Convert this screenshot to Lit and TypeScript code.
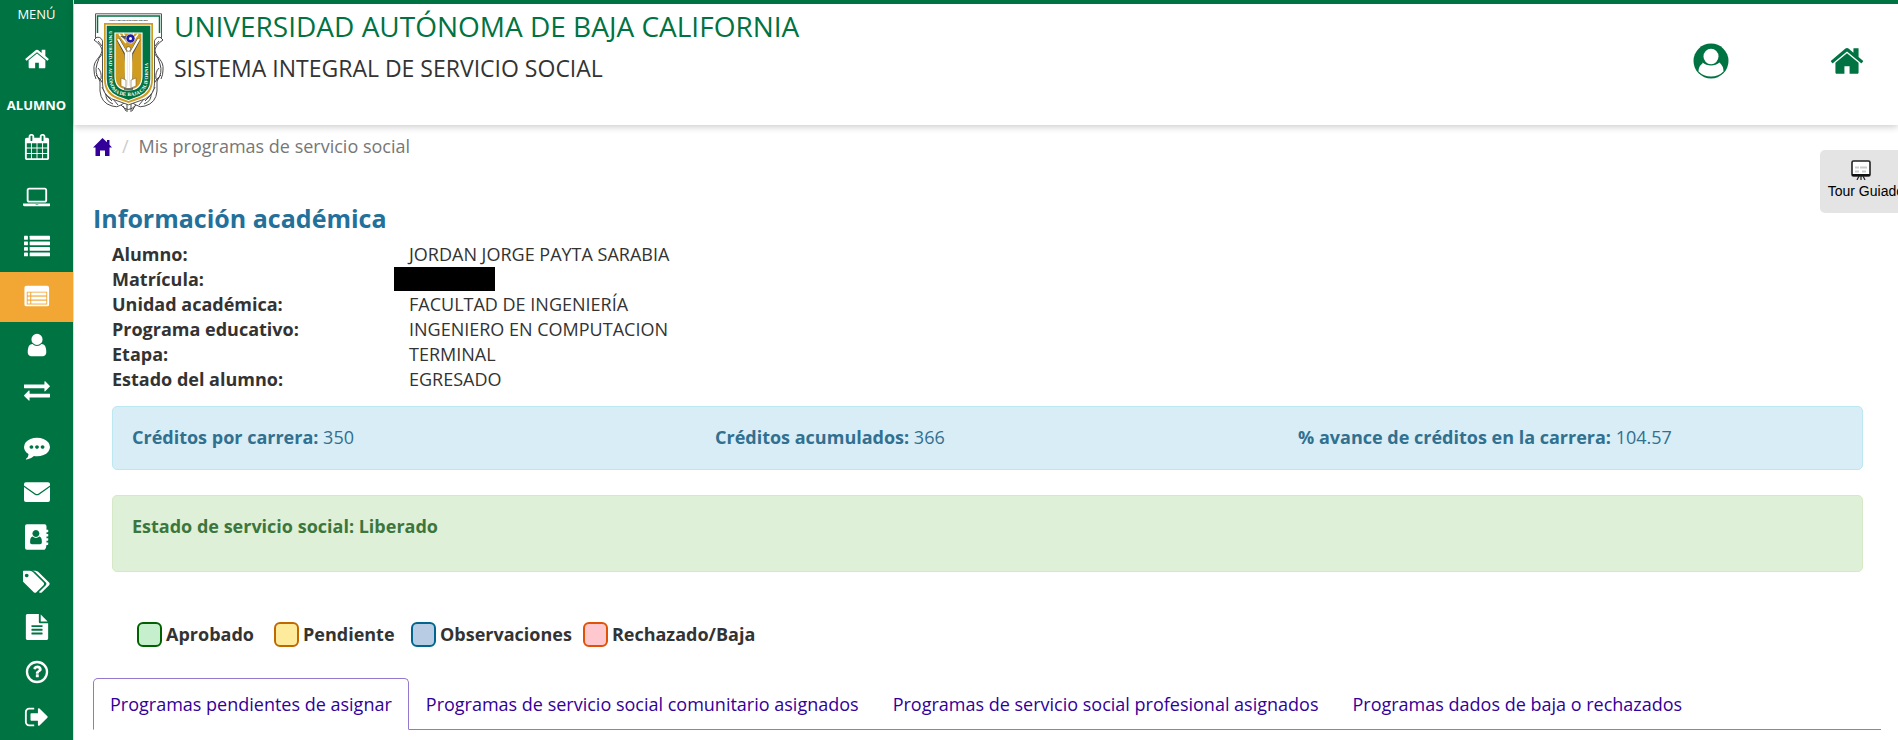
import { LitElement, html, css, svg } from "lit";
import { customElement, state } from "lit/decorators.js";

const HOME =
  "M1472 992v480q0 26-19 45t-45 19h-384v-384h-256v384h-384q-26 0-45-19t-19-45v-480q0-1 .5-3t.5-3l575-474 575 474q1 2 1 6zm223-69l-62 74q-8 9-21 11h-3q-13 0-21-7l-692-577-692 577q-12 8-24 7-13-2-21-11l-62-74q-8-10-7-23.5t11-21.5l719-599q32-26 76-26t76 26l244 204v-195q0-14 9-23t23-9h192q14 0 23 9t9 23v408l219 182q10 8 11 21.5t-7 23.5z";

const icon = (content: unknown, width = 1792) =>
  html`<svg class="icon" viewBox="0 0 ${width} 1792" aria-hidden="true">${content}</svg>`;

const homeIcon = icon(svg`<path d=${HOME} />`);

const icons = {
  calendar: icon(svg`<path d="M192 1664h288v-288h-288v288zm352 0h320v-288h-320v288zm-352-352h288v-320h-288v320zm352 0h320v-320h-320v320zm-352-384h288v-288h-288v288zm736 736h320v-288h-320v288zm-384-736h320v-288h-320v288zm768 736h288v-288h-288v288zm-384-352h320v-320h-320v320zm-352-864v-288q0-13-9.5-22.5t-22.5-9.5h-64q-13 0-22.5 9.5t-9.5 22.5v288q0 13 9.5 22.5t22.5 9.5h64q13 0 22.5-9.5t9.5-22.5zm736 864h288v-320h-288v320zm-384-384h320v-288h-320v288zm384 0h288v-288h-288v288zm32-480v-288q0-13-9.5-22.5t-22.5-9.5h-64q-13 0-22.5 9.5t-9.5 22.5v288q0 13 9.5 22.5t22.5 9.5h64q13 0 22.5-9.5t9.5-22.5zm384-64v1280q0 52-38 90t-90 38h-1408q-52 0-90-38t-38-90v-1280q0-52 38-90t90-38h128v-96q0-66 47-113t113-47h64q66 0 113 47t47 113v96h384v-96q0-66 47-113t113-47h64q66 0 113 47t47 113v96h128q52 0 90 38t38 90z" />`),
  laptop: icon(svg`<path d="M416 1280q-66 0-113-47t-47-113v-704q0-66 47-113t113-47h1088q66 0 113 47t47 113v704q0 66-47 113t-113 47h-1088zm-32-864v704q0 13 9.5 22.5t22.5 9.5h1088q13 0 22.5-9.5t9.5-22.5v-704q0-13-9.5-22.5t-22.5-9.5h-1088q-13 0-22.5 9.5t-9.5 22.5zm1376 928h160v96q0 40-47 68t-113 28h-1600q-66 0-113-28t-47-68v-96h1760zm-720 96q16 0 16-16t-16-16h-160q-16 0-16 16t16 16h160z" />`, 1920),
  list: icon([128, 512, 896, 1280].map(
    (y) => svg`<rect x="0" y=${y} width="270" height="260" rx="30" /><rect x="390" y=${y} width="1402" height="260" rx="30" />`,
  )),
  listAlt: icon(svg`
    <path fill-rule="evenodd" d="M160 128h1440q130 0 130 130v1150q0 130-130 130H160q-130 0-130-130V258q0-130 130-130zM190 530v880h1410V530z" />
    ${[590, 870, 1150].map((y) => svg`<rect x="250" y=${y} width="180" height="200" /><rect x="500" y=${y} width="1040" height="200" />`)}
  `),
  user: icon(svg`<path d="M1536 1399q0 109-62.5 187t-150.5 78h-854q-88 0-150.5-78t-62.5-187q0-85 8.5-160.5t31.5-152 58.5-131 94-89 134.5-34.5q131 128 313 128t313-128q76 0 134.5 34.5t94 89 58.5 131 31.5 152 8.5 160.5zm-256-887q0 159-112.5 271.5t-271.5 112.5-271.5-112.5-112.5-271.5 112.5-271.5 271.5-112.5 271.5 112.5 112.5 271.5z" />`),
  exchange: icon(svg`<path d="M1792 1184v192q0 13-9.5 22.5t-22.5 9.5h-1376v192q0 13-9.5 22.5t-22.5 9.5q-12 0-24-10l-319-320q-9-9-9-22 0-14 9-23l320-320q9-9 23-9 13 0 22.5 9.5t9.5 22.5v192h1376q13 0 22.5 9.5t9.5 22.5zm0-544q0 14-9 23l-320 320q-9 9-23 9-13 0-22.5-9.5t-9.5-22.5v-192h-1376q-13 0-22.5-9.5t-9.5-22.5v-192q0-13 9.5-22.5t22.5-9.5h1376v-192q0-14 9-23t23-9q12 0 24 10l319 319q9 9 9 23z" />`),
  comment: icon(svg`<path d="M640 896q0-53-37.5-90.5t-90.5-37.5-90.5 37.5-37.5 90.5 37.5 90.5 90.5 37.5 90.5-37.5 37.5-90.5zm384 0q0-53-37.5-90.5t-90.5-37.5-90.5 37.5-37.5 90.5 37.5 90.5 90.5 37.5 90.5-37.5 37.5-90.5zm384 0q0-53-37.5-90.5t-90.5-37.5-90.5 37.5-37.5 90.5 37.5 90.5 90.5 37.5 90.5-37.5 37.5-90.5zm384 0q0 174-120 321.5t-326 233-450 85.5q-110 0-211-18-173 173-435 229-52 10-86 13-12 1-22-6t-13-18q-4-15 20-37 5-5 23.5-21.5t25.5-23.5 23.5-25.5 24-31.5 20.5-37 20-48 14.5-57.5 12.5-72.5q-146-90-229.5-216.5t-83.5-269.5q0-174 120-321.5t326-233 450-85.5 450 85.5 326 233 120 321.5z" />`),
  mail: icon(svg`<path d="M0 350q0-134 134-134h1524q134 0 134 134v90L1010 1000q-114 70-228 0L0 440zM0 550l750 530q146 80 292 0l750-530v900q0 134-134 134H134Q0 1584 0 1450z" />`),
  addressBook: icon(svg`<path fill-rule="evenodd" d="M200 20h1220q130 0 130 130v250h120v130q0 40-40 40h-80v120h120v130q0 40-40 40h-80v120h120v130q0 40-40 40h-80v120h120v130q0 40-40 40h-80q0 190-130 332H200q-130 0-130-130V150Q70 20 200 20zM820 420a240 240 0 1 0 .1 0zM600 870q-180 20-180 340v60q0 120 120 120h570q120 0 120-120v-60q0-320-180-340-90 90-225 90t-225-90z" />`),
  tags: icon(svg`<path d="M384 448q0-53-37.5-90.5t-90.5-37.5-90.5 37.5-37.5 90.5 37.5 90.5 90.5 37.5 90.5-37.5 37.5-90.5zm1067 576q0 53-37 90l-491 492q-39 37-91 37-53 0-90-37l-715-716q-38-37-64.500-101t-26.500-117v-416q0-52 38-90t90-38h416q53 0 117 26.500t102 64.500l715 714q37 39 37 91zm384 0q0 53-37 90l-491 492q-39 37-91 37-36 0-59-14t-53-45l470-470q37-37 37-90 0-52-37-91l-715-714q-38-38-102-64.500t-117-26.500h224q53 0 117 26.500t102 64.500l715 714q37 39 37 91z" />`, 1856),
  file: icon(svg`<path d="M1596 476q14 14 28 36h-472v-472q22 14 36 28zm-476 164h544v1056q0 40-28 68t-68 28h-1344q-40 0-68-28t-28-68v-1600q0-40 28-68t68-28h800v544q0 40 28 68t68 28zm160 736v-64q0-14-9-23t-23-9h-704q-14 0-23 9t-9 23v64q0 14 9 23t23 9h704q14 0 23-9t9-23zm0-256v-64q0-14-9-23t-23-9h-704q-14 0-23 9t-9 23v64q0 14 9 23t23 9h704q14 0 23-9t9-23zm0-256v-64q0-14-9-23t-23-9h-704q-14 0-23 9t-9 23v64q0 14 9 23t23 9h704q14 0 23-9t9-23z" />`),
  help: icon(svg`
    <circle cx="896" cy="896" r="690" fill="none" stroke="currentColor" stroke-width="160" />
    <path transform="translate(332 290) scale(.63)" d="M1088 1256v240q0 16-12 28t-28 12h-240q-16 0-28-12t-12-28v-240q0-16 12-28t28-12h240q16 0 28 12t12 28zm316-600q0 54-15.5 101t-35 76.5-55 59.5-57.5 43.5-61 35.5q-41 23-68.5 65t-27.500 67q0 17-12 32.5t-28 15.5h-240q-15 0-25.5-18.5t-10.5-37.500v-45q0-83 65-156.500t143-108.500q59-27 84-56t25-76q0-42-46.500-74t-107.500-32q-65 0-108 29-35 25-107 115-13 16-31 16-12 0-25-8l-164-125q-13-10-15.500-25t5.500-28q160-266 464-266 80 0 161 31t146 83 106 127.500 41 158.500z" />
  `),
  exit: icon(svg`<path d="M704 1440q0 4 1 20t.5 26.5-3 23.5-10 19.5-20.5 6.5h-320q-119 0-203.500-84.500t-84.500-203.500v-704q0-119 84.500-203.500t203.500-84.500h320q13 0 22.500 9.500t9.500 22.500q0 4 1 20t.5 26.500-3 23.500-10 19.500-20.500 6.500h-320q-66 0-113 47t-47 113v704q0 66 47 113t113 47h312l11.500 1 11.500 3 8 5.500 7 9 2 13.500zm928-544q0 26-19 45l-544 544q-19 19-45 19t-45-19-19-45v-288h-448q-26 0-45-19t-19-45v-384q0-26 19-45t45-19h448v-288q0-26 19-45t45-19 45 19l544 544q19 19 19 45z" />`, 1700),
};

@customElement("uabc-crest")
class UabcCrest extends LitElement {
  static styles = css`
    :host {
      display: block;
    }
    .crest {
      display: block;
      width: 71px;
      height: 100px;
    }
    .motto {
      font: bold 2px "Liberation Sans", sans-serif;
      text-anchor: middle;
    }
    .legend {
      font: bold 5px "Liberation Serif", serif;
      fill: #fff;
    }
  `;

  render() {
    return html`<svg class="crest" viewBox="0 0 71 100" role="img" aria-label="Escudo UABC">
      <g fill="#fff" stroke="#4a4a4a" stroke-width="1">
        <path d="M2.500 21C1 28 11 29 9 38 7 46 0 47 1 57q0 5 2 9M68.500 21C70 28 60 29 62 38 64 46 71 47 70 57q0 5-2 9" />
        <path d="M1 27q5-6 8-2l2 4v46L7 68Q1 60 4 51q1-6 6-11-1-8-9-13zM70 27q-5-6-8-2l-2 4v46l4-7q6-8 3-17-1-6-6-11 1-8 9-13z" />
        <path d="M7 66v12q1 12 12 15 5 2 9-1 7 9 15 0 4 3 9 1 11-3 12-15V66L52 84q-16 9-33 0z" />
        <path d="M9 74q3 9 10 14M62 74q-3 9-10 14M13 80q-1 8 7 11M58 80q1 8-7 11M20 86l5 6M51 86l-5 6" fill="none" />
        <path d="M28 92q7-6 15 0M30 93l3 5M34 91v8M38 91v8M42 93l-3 5M5 55q4 4 3 11M66 55q-4 4-3 11M5 28l4 5M66 28l-4 5M3 62l5 5M68 62l-5 5" fill="none" />
      </g>
      <path d="M2.500.8h66v24q-5-2-7 3v43q0 10-9 15l-17 6-17-6q-9-5-9-15v-43q-2-5-7-3z" fill="#fff" stroke="#555" />
      <path d="M4.500 20V3h62v17" fill="none" stroke="#007342" stroke-width="1.500" />
      <text class="motto" x="35.500" y="7.500">POR LA REALIZACIÓN PLENA DEL SER</text>
      <path d="M11 10h49v56q0 15-13 20l-11.500 4L24 86q-13-5-13-20z" fill="#cf9b21" />
      <path d="M12.700 11.700h45.600V66q0 13-12 18l-10.800 4-10.800-4q-12-5-12-18z" fill="#fff" />
      <path d="M13.700 12.700h43.600V66q0 12-11 17l-10.800 4-10.800-4q-11-5-11-17z" fill="#007342" />
      <path id="around" d="M16 16v48q0 19 19.500 19T55 64V16" fill="none" />
      <text class="legend"><textPath href="#around" startOffset="2">UNIVERSIDAD AUTÓNOMA DE BAJA CALIFORNIA</textPath></text>
      <path d="M22 20h27v43q0 14-13.500 14T22 63z" fill="#cf9b21" stroke="#fff" stroke-width="1.200" />
      <path d="M26 21l7 9M45 21l-7 9M30 20l4 8M41 20l-4 8" stroke="#fff" stroke-width="1.500" />
      <path d="M27 23h11l-3 5z" fill="#555" />
      <circle cx="37.500" cy="25.500" r="4.500" fill="#1d1aa5" stroke="#fff" stroke-width=".6" />
      <circle cx="37.500" cy="25.500" r="1.500" fill="#fff" />
      <path d="M25 26l8 15 1 11-1 23h5l-1-23 1-11 8-15" fill="none" stroke="#4d4639" stroke-width="3.600" />
      <path d="M25 26l8 14v34h5V40l8-14M35.500 38v35" fill="none" stroke="#fff" stroke-width="2.400" />
      <circle cx="35.500" cy="36" r="2.300" fill="#fff" stroke="#4d4639" stroke-width=".6" />
      <path d="M28 65l5 2v8l-5-2zM43 65l-5 2v8l5-2z" fill="#fff" stroke="#80662a" stroke-width=".6" />
    </svg>`;
  }
}

@customElement("app-root")
class AppRoot extends LitElement {
  @state() private tab = 0;

  static styles = css`
    :host {
      display: flex;
      min-height: 100vh;
      overflow: hidden;
      position: relative;
      font-family: "Open Sans", "Noto Sans", sans-serif;
      font-size: 18px;
      line-height: 25px;
      color: #333;
      background: #fff;
    }
    * {
      box-sizing: border-box;
    }
    a {
      color: inherit;
      text-decoration: none;
    }
    .icon {
      display: block;
      height: 26px;
      fill: currentColor;
    }
    .sidebar {
      flex: none;
      width: 74px;
      background: #007342;
      color: #fff;
      border-right: 1px solid #cfe6da;
      text-align: center;
    }
    .menu-title {
      font-size: 13px;
      line-height: 28px;
    }
    .menu-section {
      font-size: 13px;
      font-weight: bold;
      line-height: 30px;
      padding-bottom: 2px;
    }
    .links {
      list-style: none;
      margin: 0;
      padding: 0;
    }
    .links.lower {
      padding-top: 12px;
    }
    .link {
      display: flex;
      align-items: center;
      justify-content: center;
      height: 50px;
    }
    .link.start {
      height: 62px;
    }
    .middle .link,
    .lower .link {
      height: 45px;
    }
    .link.active {
      background: #f2a633;
    }
    .page {
      flex: 1;
      min-width: 0;
    }
    .header {
      display: flex;
      align-items: flex-start;
      border-top: 4px solid #007342;
      padding: 9px 33px 12px 19px;
      gap: 10px;
      box-shadow: 0 2px 7px rgba(0, 0, 0, 0.2);
    }
    .titles {
      flex: 1;
    }
    .title,
    .subtitle {
      margin: 0;
      font-weight: normal;
      line-height: 30px;
    }
    .title {
      margin-top: -2px;
      font-size: 28px;
      color: #007342;
    }
    .subtitle {
      font-size: 23px;
      padding-top: 12px;
    }
    .actions {
      display: flex;
      align-items: center;
      gap: 100px;
      height: 96px;
      color: #007342;
    }
    .actions .icon {
      height: 36px;
    }
    .content {
      padding: 9px 17px 0 19px;
    }
    .breadcrumb {
      display: flex;
      align-items: center;
      color: #777;
      padding-bottom: 42px;
    }
    .crumb-home {
      color: #330099;
    }
    .crumb-home svg {
      display: block;
      width: 19px;
      height: 18px;
      fill: currentColor;
    }
    .slash {
      color: #ccc;
      padding: 0 10px;
    }
    .heading {
      margin: 0;
      font-size: 25px;
      line-height: 34px;
      color: #23719a;
    }
    .panel {
      padding: 7px 18px 0 19px;
    }
    .facts {
      display: grid;
      grid-template-columns: 297px 1fr;
      margin: 0;
    }
    .facts dt {
      font-weight: bold;
    }
    .facts dd {
      margin: 0;
    }
    .redacted {
      display: block;
      width: 101px;
      height: 24px;
      margin-left: -15px;
      background: #000;
    }
    .box {
      border: 1px solid;
      border-radius: 5px;
    }
    .credits {
      display: grid;
      grid-template-columns: repeat(3, 1fr);
      margin: 14px 0 25px;
      padding: 18px 0 19px;
      color: #31708f;
      background: #d9edf7;
      border-color: #bce8f1;
    }
    .credits span {
      padding-left: 19px;
    }
    .status {
      padding: 18px 19px 32px;
      color: #3c763d;
      background: #dff0d8;
      border-color: #d6e9c6;
      font-weight: bold;
    }
    .keys {
      display: flex;
      flex-wrap: wrap;
      list-style: none;
      margin: 0;
      padding: 50px 25px 31px;
      font-weight: bold;
    }
    .key {
      display: flex;
      gap: 4px;
      min-width: 137px;
      padding-right: 11px;
    }
    .swatch {
      width: 25px;
      height: 25px;
      border: 2px solid;
      border-radius: 6px;
    }
    .approved {
      background: #c6efce;
      border-color: #006100;
    }
    .pending {
      background: #ffeb9c;
      border-color: #bf6900;
    }
    .notes {
      background: #b8cce4;
      border-color: #00668f;
    }
    .rejected {
      background: #ffc7ce;
      border-color: #e05206;
    }
    .tabs {
      display: flex;
      border-bottom: 1px solid #9478cd;
    }
    .tab {
      font: inherit;
      color: #330099;
      background: none;
      margin: 0 0 -1px;
      padding: 13px 16px 12px;
      border: 1px solid transparent;
      border-radius: 5px 5px 0 0;
      cursor: pointer;
    }
    .tab.active {
      background: #fff;
      border-color: #9478cd;
      border-bottom-color: #fff;
    }
    .tour {
      position: absolute;
      top: 150px;
      right: -14px;
      display: flex;
      flex-direction: column;
      align-items: center;
      gap: 1px;
      padding: 10px 8px;
      height: 63px;
      border: 0;
      border-radius: 5px;
      background: #e4e4e4;
      color: #000;
      font: 14px/20px "Liberation Sans", Arial, sans-serif;
    }
    .tour svg {
      width: 20px;
      height: 20px;
      margin-right: 10px;
    }
  `;

  private link(label: string, glyph: unknown, active = false) {
    return html`<li><a class="link ${active ? "active" : ""}" href="#" aria-label=${label}>${glyph}</a></li>`;
  }

  render() {
    const tabs = [
      "Programas pendientes de asignar",
      "Programas de servicio social comunitario asignados",
      "Programas de servicio social profesional asignados",
      "Programas dados de baja o rechazados",
    ];
    return html`
      <nav class="sidebar" aria-label="Menú">
        <div class="menu-title">MENÚ</div>
        <a class="link start" href="#" aria-label="Inicio">${homeIcon}</a>
        <div class="menu-section">ALUMNO</div>
        <ul class="links">
          ${this.link("Calendario", icons.calendar)}
          ${this.link("Cursos", icons.laptop)}
          ${this.link("Listado", icons.list)}
          ${this.link("Mis programas", icons.listAlt, true)}
        </ul>
        <ul class="links middle">
          ${this.link("Perfil", icons.user)}
          ${this.link("Cambios", icons.exchange)}
        </ul>
        <ul class="links lower">
          ${this.link("Comentarios", icons.comment)}
          ${this.link("Correo", icons.mail)}
          ${this.link("Contactos", icons.addressBook)}
          ${this.link("Etiquetas", icons.tags)}
          ${this.link("Documentos", icons.file)}
          ${this.link("Ayuda", icons.help)}
          ${this.link("Salir", icons.exit)}
        </ul>
      </nav>
      <div class="page">
        <header class="header">
          <uabc-crest></uabc-crest>
          <div class="titles">
            <h1 class="title">UNIVERSIDAD AUTÓNOMA DE BAJA CALIFORNIA</h1>
            <h2 class="subtitle">SISTEMA INTEGRAL DE SERVICIO SOCIAL</h2>
          </div>
          <div class="actions">
            <a href="#" aria-label="Usuario">
              <svg class="icon" viewBox="0 0 36 36" aria-hidden="true">
                <circle cx="18" cy="18" r="17.500" />
                <path d="M9.500 20.500Q5.500 23 5.500 28.500 10.500 33.500 18 33.500T30.500 28.500Q30.500 23 26.500 19.500 23 22.500 18 22.500T9.500 19.500z" fill="#fff" />
                <ellipse cx="18" cy="13.500" rx="7.500" ry="7.800" fill="#fff" />
              </svg>
            </a>
            <a href="#" aria-label="Inicio">${homeIcon}</a>
          </div>
        </header>
        <main class="content">
          <nav class="breadcrumb" aria-label="Ruta">
            <a class="crumb-home" href="#" aria-label="Inicio">
              <svg viewBox="0 0 19 18" aria-hidden="true"><path d="M9.500 0L14 4.300V2h2.500v4.800L19 9.500h-2.500V18H12v-5.500H7V18H2.500V9.500H0z" /></svg>
            </a>
            <span class="slash">/</span>
            <span>Mis programas de servicio social</span>
          </nav>
          <h3 class="heading">Información académica</h3>
          <section class="panel">
            <dl class="facts">
              <dt>Alumno:</dt><dd>JORDAN JORGE PAYTA SARABIA</dd>
              <dt>Matrícula:</dt><dd><span class="redacted"></span></dd>
              <dt>Unidad académica:</dt><dd>FACULTAD DE INGENIERÍA</dd>
              <dt>Programa educativo:</dt><dd>INGENIERO EN COMPUTACION</dd>
              <dt>Etapa:</dt><dd>TERMINAL</dd>
              <dt>Estado del alumno:</dt><dd>EGRESADO</dd>
            </dl>
            <div class="box credits">
              <span><b>Créditos por carrera:</b> 350</span>
              <span><b>Créditos acumulados:</b> 366</span>
              <span><b>% avance de créditos en la carrera:</b> 104.57</span>
            </div>
            <div class="box status">Estado de servicio social: Liberado</div>
            <ul class="keys">
              <li class="key"><span class="swatch approved"></span>Aprobado</li>
              <li class="key"><span class="swatch pending"></span>Pendiente</li>
              <li class="key"><span class="swatch notes"></span>Observaciones</li>
              <li class="key"><span class="swatch rejected"></span>Rechazado/Baja</li>
            </ul>
          </section>
          <div class="tabs" role="tablist">
            ${tabs.map(
              (name, i) => html`<button
                class="tab ${i === this.tab ? "active" : ""}"
                role="tab"
                aria-selected=${i === this.tab}
                @click=${() => (this.tab = i)}
              >${name}</button>`,
            )}
          </div>
        </main>
      </div>
      <button class="tour">
        <svg viewBox="0 0 20 20" aria-hidden="true">
          <path d="M10 15v5M8 16l-2 4M12 16l2 4" stroke="#222" stroke-width="1.200" />
          <rect x="1" y="1" width="18" height="15" rx="1.500" fill="#fff" stroke="#222" stroke-width="1.600" />
          <path d="M1 15h18" stroke="#111" stroke-width="2" />
          <path d="M4 7.500h4M9 7.500h7M4 11.500h4M11 11.500h4" stroke="#ccc" stroke-width="2" />
        </svg>
        Tour Guiado
      </button>
    `;
  }
}
